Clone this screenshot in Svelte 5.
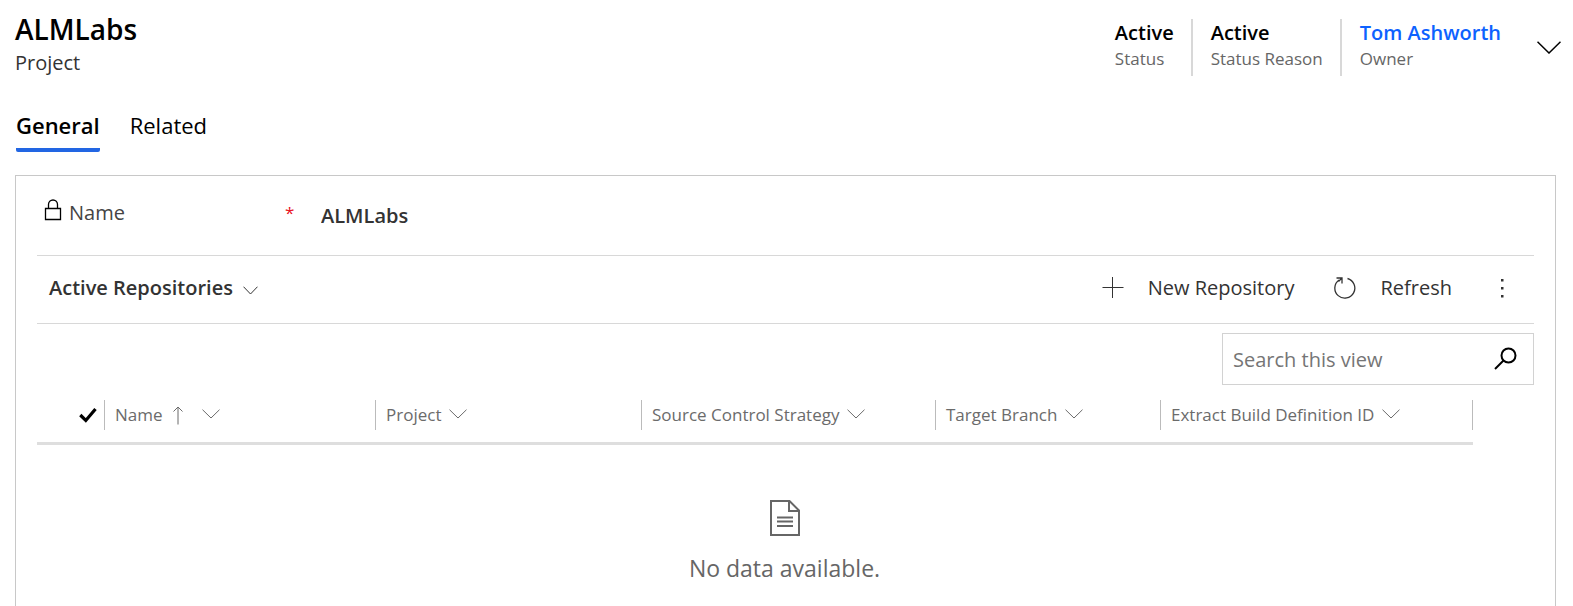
<script>
  const facts = [
    { value: 'Active', label: 'Status' },
    { value: 'Active', label: 'Status Reason' },
    { value: 'Tom Ashworth', label: 'Owner', link: true }
  ];

  const columns = [
    { name: 'Name', share: 271, sorted: true },
    { name: 'Project', share: 266 },
    { name: 'Source Control Strategy', share: 294 },
    { name: 'Target Branch', share: 225 },
    { name: 'Extract Build Definition ID', share: 313 }
  ];
  const total = 1436;

  let name = $state('ALMLabs');
  let query = $state('');
</script>

{#snippet chevron(width, height)}
  <svg class="chevron" {width} {height} viewBox="0 0 {width} {height}" aria-hidden="true">
    <path d="M.5 .7 L{width / 2} {height - 1} L{width - 0.5} .7" />
  </svg>
{/snippet}

<div class="page">
  <header>
    <div class="title">
      <h1>ALMLabs</h1>
      <p>Project</p>
    </div>
    <div class="facts">
      {#each facts as fact}
        <div class="fact">
          {#if fact.link}
            <a class="value" href="#owner">{fact.value}</a>
          {:else}
            <span class="value">{fact.value}</span>
          {/if}
          <span class="label">{fact.label}</span>
        </div>
      {/each}
      <button class="expand" aria-label="More header fields">{@render chevron(24, 13)}</button>
    </div>
  </header>

  <nav>
    <button class="tab selected">General</button>
    <button class="tab">Related</button>
  </nav>

  <main>
    <div class="field">
      <label for="name">
        <svg width="18" height="22" viewBox="0 0 18 22" aria-hidden="true">
          <path d="M1.500 9.500h15v11h-15zM4.500 9.500V5.500a4.500 4.500 0 0 1 9 0v4" />
        </svg>
        Name
      </label>
      <span class="required">*</span>
      <input id="name" bind:value={name} readonly />
    </div>

    <div class="toolbar">
      <button class="view">Active Repositories {@render chevron(15, 9)}</button>
      <div class="commands">
        <button class="command">
          <svg width="22" height="22" viewBox="0 0 22 22" aria-hidden="true">
            <path d="M0.500 10.500h21M10.500 0v21" />
          </svg>
          New Repository
        </button>
        <button class="command refresh">
          <svg width="22" height="22" viewBox="0 0 22 22" aria-hidden="true">
            <path d="M13.500 1.500A10 10 0 1 1 5 3M2.500 1H8v5.500M8 1L4.500 4.500" />
          </svg>
          Refresh
        </button>
        <button class="more" aria-label="More commands">
          <svg width="4" height="20" viewBox="0 0 4 20" aria-hidden="true">
            <path d="M1 1h2.500v2.500h-2.500zM1 9h2.500v2.500h-2.500zM1 17h2.500v2.500h-2.500z" />
          </svg>
        </button>
      </div>
    </div>

    <div class="search">
      <input aria-label="Search this view" placeholder="Search this view" bind:value={query} />
      <button aria-label="Search">
        <svg width="23" height="23" viewBox="0 0 23 23" aria-hidden="true">
          <circle cx="14.500" cy="8.500" r="7" />
          <path d="M9.500 13.500L1 22" />
        </svg>
      </button>
    </div>

    <table>
      <colgroup>
        <col />
        {#each columns as column}
          <col style="width: {(column.share / total) * 100}%" />
        {/each}
      </colgroup>
      <thead>
        <tr>
          <th>
            <button class="check" aria-label="Select all">
              <svg width="18" height="16" viewBox="0 0 18 16" aria-hidden="true">
                <path d="M1.300 8l5.500 5.500L16.500 2" />
              </svg>
            </button>
          </th>
          {#each columns as column}
            <th>
              <button class="column">
                {column.name}
                {#if column.sorted}
                  <svg class="arrow" width="10" height="19" viewBox="0 0 10 19" aria-hidden="true">
                    <path d="M5 18.500V1M.5 5.500L5 1l4.500 4.500" />
                  </svg>
                {/if}
                {@render chevron(18, 10)}
              </button>
            </th>
          {/each}
        </tr>
      </thead>
    </table>

    <div class="empty">
      <svg width="30" height="36" viewBox="0 0 30 36" aria-hidden="true">
        <path d="M1 1h18.500l9.500 9.500V35H1zM19 1v10h10M7 17.500h16M7 21.500h16M7 26h16" />
      </svg>
      <p>No data available.</p>
    </div>
  </main>
</div>

<style>
  :global(body) {
    margin: 0;
    background: #fff;
  }

  .page {
    display: flex;
    flex-direction: column;
    box-sizing: border-box;
    min-height: 100vh;
    padding: 0 17px 0 15px;
    font-family: 'Segoe UI', 'Open Sans', sans-serif;
    font-size: 20px;
    line-height: 28px;
    color: #333;
  }

  button,
  input {
    padding: 0;
    border: 0;
    background: none;
    font: inherit;
    color: inherit;
    outline: none;
  }

  button {
    display: flex;
    align-items: center;
    cursor: pointer;
  }

  h1,
  p {
    margin: 0;
  }

  svg {
    flex: none;
    fill: none;
    stroke: currentColor;
  }

  header {
    display: flex;
    justify-content: space-between;
    height: 76px;
  }

  .title {
    padding-top: 11px;
  }

  h1 {
    font-size: 28px;
    font-weight: 600;
    line-height: 36px;
    color: #000;
  }

  .title p {
    line-height: 32px;
  }

  .facts {
    display: flex;
    padding-top: 19px;
  }

  .fact {
    display: flex;
    flex-direction: column;
    padding: 0 17px 0 18px;
    border-left: 2px solid #d8d8d8;
  }

  .fact:first-child {
    border-left: 0;
  }

  .value {
    font-weight: 600;
    color: #000;
    text-decoration: none;
  }

  a.value {
    color: #0d62ff;
  }

  .label {
    font-size: 17px;
    line-height: 24px;
    color: #666;
  }

  .expand {
    margin: 0 -5px 0 19px;
    color: #000;
  }

  .expand .chevron {
    stroke-width: 1.5;
  }

  nav {
    display: flex;
    gap: 30px;
    padding: 32px 1px 23px;
    font-size: 22px;
    line-height: 34px;
    color: #000;
  }

  .tab {
    height: 44px;
    border-bottom: 4px solid transparent;
    align-items: flex-start;
  }

  .selected {
    font-weight: 600;
    border-color: #2266e3;
    border-radius: 2px;
  }

  main {
    display: flex;
    flex: 1;
    flex-direction: column;
    padding: 0 21px;
    border: 1px solid #c8c8c8;
    border-bottom: 0;
  }

  .field {
    display: flex;
    align-items: center;
    height: 79px;
    padding-left: 7px;
    border-bottom: 1px solid #d8d8d8;
  }

  .field label {
    display: flex;
    gap: 7px;
    width: 241px;
    padding-bottom: 6px;
    color: #444;
  }

  .field label svg {
    color: #000;
    stroke-width: 1.3;
  }

  .required {
    width: 36px;
    padding-bottom: 6px;
    font-size: 17px;
    color: #e81123;
  }

  .field input {
    flex: 1;
    font-weight: 600;
  }

  .toolbar {
    display: flex;
    justify-content: space-between;
    box-sizing: border-box;
    height: 68px;
    padding: 0 30px 3px 12px;
    border-bottom: 1px solid #d8d8d8;
  }

  .view {
    gap: 10px;
    font-weight: 600;
  }

  .view .chevron {
    margin-top: 4px;
  }

  .commands {
    display: flex;
    gap: 40px;
  }

  .command {
    gap: 24px;
  }

  .refresh svg {
    stroke-width: 1.3;
  }

  .more {
    margin-left: 8px;
  }

  .more path {
    fill: currentColor;
    stroke: none;
  }

  .search {
    display: flex;
    align-self: flex-end;
    box-sizing: border-box;
    width: 312px;
    height: 52px;
    margin-top: 9px;
    padding: 0 16px 0 10px;
    border: 1px solid #d2d2d2;
  }

  .search input {
    flex: 1;
    min-width: 0;
    padding-top: 2px;
  }

  .search input::placeholder {
    color: #757575;
    opacity: 1;
  }

  .search button {
    padding-bottom: 2px;
  }

  .search svg {
    color: #000;
    stroke-width: 2;
  }

  table {
    width: calc(100% - 61px);
    table-layout: fixed;
    border-collapse: collapse;
    font-size: 17px;
    line-height: 30px;
    color: #6b6b6b;
  }

  th {
    padding: 15px 0 12px;
    border-bottom: 3px solid #dedede;
    font-weight: 400;
    text-align: left;
  }

  th:last-child .column {
    border-right: 1px solid #bbb;
  }

  .column {
    gap: 8px;
    width: 100%;
    height: 30px;
    padding-left: 10px;
    border-left: 1px solid #bbb;
    white-space: nowrap;
  }

  .arrow {
    margin: 0 11px 0 2px;
  }

  .column .chevron {
    margin-bottom: 2px;
  }

  .check {
    margin-left: auto;
    padding-right: 7px;
    color: #000;
  }

  .check svg {
    stroke-width: 3.2;
  }

  .empty {
    display: flex;
    flex-direction: column;
    align-items: center;
    gap: 16px;
    padding: 55px 2px 0 0;
    font-size: 23px;
    line-height: 32px;
    color: #666;
  }

  .empty svg {
    stroke-width: 2;
  }
</style>
